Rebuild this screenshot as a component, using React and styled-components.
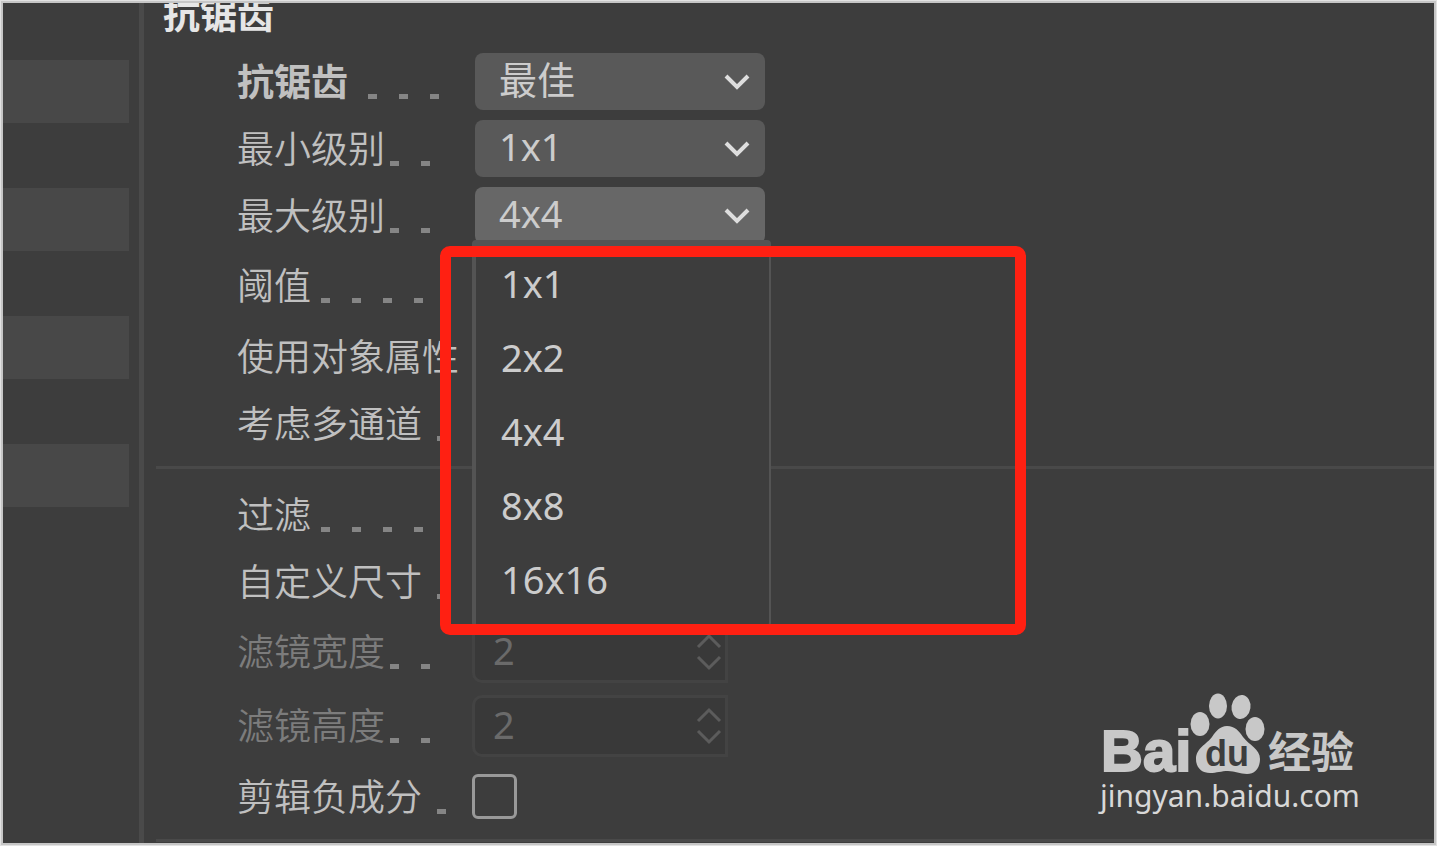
import { useState } from 'react';
import styled, { createGlobalStyle } from 'styled-components';


const levels = ['1x1', '2x2', '4x4', '8x8', '16x16'];

function Chevron({ up, thin }) {
    return (
        <svg width="26" height="17" viewBox="0 0 26 17" fill="none" stroke="currentColor" strokeWidth={thin ? 3 : 4} aria-hidden="true">
            <path d={up ? 'M2 15L13 4L24 15' : 'M2 2L13 13L24 2'} />
        </svg>
    )
}

function Dots({ count, space }) {
    return (
        <Leader $space={space} aria-hidden="true">
            {Array.from({ length: count }, (_, i) => <Dot key={i} />)}
        </Leader>
    )
}

function Dropdown({ id, value, options, open, onChange, children }) {
    return (
        <SelectBox>
            <Select id={id} value={value} $open={open} onChange={(e) => onChange(e.target.value)}>
                {options.map(o => <option key={o}>{o}</option>)}
            </Select>
            <Arrow><Chevron /></Arrow>
            {children}
        </SelectBox>
    )
}

function NumberField({ id, value }) {
    return (
        <NumberBox>
            <NumberInput id={id} type="text" defaultValue={value} disabled />
            <Stepper>
                <Chevron up thin />
                <Chevron thin />
            </Stepper>
        </NumberBox>
    )
}

function Logo() {
    return (
        <LogoArt width="260" height="86" viewBox="0 0 260 86" fill="#c8c8c8" role="img" aria-label="Bai du 经验">
            <text x="1" y="82" fontFamily="Liberation Sans, sans-serif" fontWeight="700" fontSize="58" stroke="#c8c8c8" strokeWidth="2">Bai</text>
            <ellipse cx="100" cy="35" rx="9.5" ry="12" />
            <ellipse cx="118" cy="17" rx="9" ry="12.5" />
            <ellipse cx="141" cy="18" rx="9.5" ry="12" transform="rotate(8 141 18)" />
            <ellipse cx="155" cy="40" rx="9.5" ry="12" />
            <path d="M127 37C120 37 116 42 112 48C107 55 96 59 96 70C96 79 102 84 110 84C117 84 121 82 128 82C135 82 140 85 147 85C155 85 160 79 160 70C160 60 149 56 143 48C139 42 135 37 127 37Z" />
            <text x="105" y="77" fill="#3d3d3d" fontFamily="Liberation Sans, sans-serif" fontWeight="700" fontSize="36">du</text>
            <text x="168" y="79" fontFamily="Noto Sans CJK SC, sans-serif" fontWeight="700" fontSize="43">经验</text>
        </LogoArt>
    )
}

export default function App() {
    const [mode, setMode] = useState('最佳');
    const [min, setMin] = useState('1x1');
    const [max, setMax] = useState('4x4');
    const [clip, setClip] = useState(false);

    return (
        <Frame>
            <GlobalStyle />
            <Window>
                <Sidebar>
                    <SideItem />
                    <SideItem />
                    <SideItem />
                    <SideItem />
                </Sidebar>
                <Panel>
                    <Title>抗锯齿</Title>
                    <Row>
                        <Label htmlFor="mode" $bold>抗锯齿<Dots count={3} space={20} /></Label>
                        <Dropdown id="mode" value={mode} options={['最佳']} onChange={setMode} />
                    </Row>
                    <Row>
                        <Label htmlFor="min">最小级别<Dots count={2} space={5} /></Label>
                        <Dropdown id="min" value={min} options={levels} onChange={setMin} />
                    </Row>
                    <Row>
                        <Label htmlFor="max">最大级别<Dots count={2} space={5} /></Label>
                        <Dropdown id="max" value={max} options={levels} onChange={setMax} open>
                            <Menu role="listbox" aria-label="最大级别">
                                {levels.map(l => (
                                    <MenuItem key={l} role="option" aria-selected={l === max} onClick={() => setMax(l)}>{l}</MenuItem>
                                ))}
                            </Menu>
                            <Highlight />
                        </Dropdown>
                    </Row>
                    <Row $tall>
                        <Label as="span">阈值<Dots count={4} space={10} /></Label>
                    </Row>
                    <Row>
                        <Label as="span">使用对象属性</Label>
                    </Row>
                    <Row>
                        <Label as="span">考虑多通道<Dots count={1} space={15} /></Label>
                    </Row>
                    <Divider />
                    <Row>
                        <Label as="span">过滤<Dots count={4} space={10} /></Label>
                    </Row>
                    <Row>
                        <Label as="span">自定义尺寸<Dots count={1} space={15} /></Label>
                    </Row>
                    <Row $tall>
                        <Label htmlFor="width" $disabled>滤镜宽度<Dots count={2} space={5} /></Label>
                        <NumberField id="width" value="2" />
                    </Row>
                    <Row $tall>
                        <Label htmlFor="height" $disabled>滤镜高度<Dots count={2} space={5} /></Label>
                        <NumberField id="height" value="2" />
                    </Row>
                    <Row>
                        <Label htmlFor="clip">剪辑负成分<Dots count={1} space={15} /></Label>
                        <Checkbox id="clip" type="checkbox" checked={clip} onChange={(e) => setClip(e.target.checked)} />
                    </Row>
                    <Divider $last />
                </Panel>
                <Watermark>
                    <Logo />
                    <Site>jingyan.baidu.com</Site>
                </Watermark>
            </Window>
        </Frame>
    )
}

const GlobalStyle = createGlobalStyle`
    * {
        box-sizing: border-box;
    }
    body {
        margin: 0;
        background: #3d3d3d;
        font-family: "Noto Sans", "Noto Sans CJK SC", sans-serif;
    }
`

const Frame = styled.div`
    display: flex;
    min-height: 100vh;
    border: 1px solid #e2e2e2;
`

const Window = styled.div`
    position: relative;
    display: flex;
    flex: 1;
    border: 2px solid #c6c6c6;
    background: #3d3d3d;
    overflow: hidden;
`

const Sidebar = styled.aside`
    display: flex;
    flex-direction: column;
    gap: 65px;
    width: 141px;
    padding: 57px 10px 0 0;
    border-right: 5px solid #4a4a4a;
`
const SideItem = styled.div`
    height: 63px;
    background: #484848;
`

const Panel = styled.main`
    flex: 1;
    margin-left: 12px;
`

const Title = styled.h1`
    display: flex;
    align-items: flex-end;
    height: 45px;
    margin: 0;
    padding-left: 7px;
    overflow: hidden;
    color: #e6e6e6;
    font-size: 37px;
    line-height: 67px;
`

const Row = styled.div`
    display: flex;
    align-items: center;
    height: ${p => p.$tall ? '74px' : '67px'};
    padding-left: 81px;
`

const Label = styled.label`
    display: flex;
    align-items: center;
    width: 235px;
    color: ${p => p.$disabled ? '#7c7c7c' : '#c0c0c0'};
    font-size: 37px;
    font-weight: ${p => p.$bold ? 700 : 350};
    line-height: 56px;
    white-space: nowrap;
`

const Leader = styled.span`
    display: flex;
    gap: 22px;
    margin-left: ${p => p.$space}px;
    padding-top: 29px;
`
const Dot = styled.span`
    width: 9px;
    height: 5px;
    background: #858585;
`

const SelectBox = styled.div`
    position: relative;
    width: 290px;
    height: 57px;
    margin-left: 3px;
`
const Select = styled.select`
    appearance: none;
    width: 100%;
    height: 100%;
    padding: 0 60px 4px 24px;
    border: 0;
    border-radius: 8px;
    background: ${p => p.$open ? '#676767' : '#595959'};
    color: #cccccc;
    font-family: inherit;
    font-size: 38px;
    line-height: 53px;
`
const Arrow = styled.span`
    position: absolute;
    top: 21px;
    right: 15px;
    display: flex;
    color: #dedede;
    pointer-events: none;
`

const Menu = styled.ul`
    position: absolute;
    top: 53px;
    left: -3px;
    z-index: 1;
    width: 299px;
    height: 387px;
    margin: 0;
    padding: 0;
    border: solid #545454;
    border-width: 6px 2px 2px 4px;
    border-radius: 4px;
    background: #3d3d3d;
    list-style: none;
`
const MenuItem = styled.li`
    padding-left: 25px;
    color: #cccccc;
    font-size: 38px;
    line-height: 74px;
`

const Highlight = styled.div`
    position: absolute;
    top: 59px;
    left: -35px;
    z-index: 2;
    width: 586px;
    height: 389px;
    border: 11px solid #ff2012;
    border-radius: 10px;
    pointer-events: none;
`

const NumberBox = styled.div`
    display: flex;
    align-items: center;
    width: 256px;
    height: 62px;
    padding-right: 3px;
    border: 3px solid #434343;
    border-radius: 10px 0 0 10px;
    background: #393939;
`
const NumberInput = styled.input`
    flex: 1;
    min-width: 0;
    padding: 0 0 4px 18px;
    border: 0;
    background: none;
    color: #6a6a6a;
    font-family: inherit;
    font-size: 38px;
    line-height: 56px;
`
const Stepper = styled.span`
    display: flex;
    flex-direction: column;
    gap: 6px;
    color: #5c5c5c;
`

const Checkbox = styled.input`
    appearance: none;
    width: 45px;
    height: 45px;
    margin: 0;
    border: 3px solid #999999;
    border-radius: 6px;

    &:checked {
        background: #999999;
    }
`

const Divider = styled.hr`
    height: 3px;
    margin: 9px 0 ${p => p.$last ? '0' : '12px'};
    border: 0;
    background: #494949;
`

const Watermark = styled.div`
    position: absolute;
    right: 74px;
    bottom: 26px;
    display: flex;
    flex-direction: column;
`
const LogoArt = styled.svg`
    overflow: visible;
`
const Site = styled.span`
    color: #d8d8d8;
    font-size: 30px;
    line-height: 42px;
`
